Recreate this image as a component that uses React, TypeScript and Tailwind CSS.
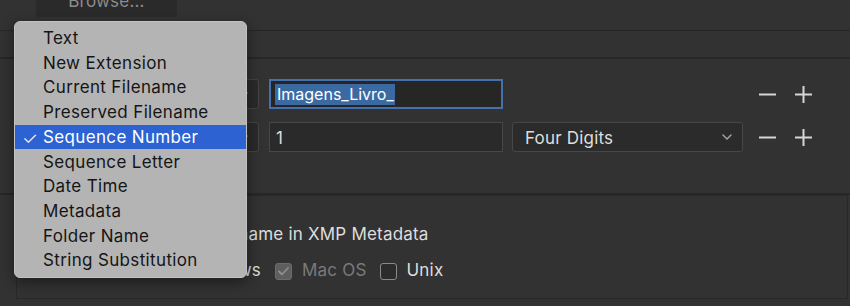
import React from "react";

const MENU_ITEMS = [
  "Text",
  "New Extension",
  "Current Filename",
  "Preserved Filename",
  "Sequence Number",
  "Sequence Letter",
  "Date Time",
  "Metadata",
  "Folder Name",
  "String Substitution",
];

function Chevron() {
  return (
    <svg width="10" height="6" viewBox="0 0 10 6" fill="none">
      <path d="M1 1l4 4 4-4" stroke="#a8a8a8" strokeWidth="1.4" strokeLinecap="round" strokeLinejoin="round" />
    </svg>
  );
}

function MinusPlus() {
  return (
    <div className="ml-[16px] flex items-center gap-[19px]">
      <svg width="17" height="17" viewBox="0 0 17 17">
        <path d="M0 8.5h17" stroke="#d6d6d6" strokeWidth="2" />
      </svg>
      <svg width="17" height="17" viewBox="0 0 17 17">
        <path d="M0 8.5h17M8.5 0v17" stroke="#d6d6d6" strokeWidth="2" />
      </svg>
    </div>
  );
}

function Checkbox({ checked, disabled }: { checked?: boolean; disabled?: boolean }) {
  if (checked) {
    return (
      <div className="w-[17px] h-[17px] rounded-[3px] bg-[#5e5e5e] border border-[#6c6c6c] flex items-center justify-center">
        <svg width="11" height="9" viewBox="0 0 11 9" fill="none">
          <path d="M1 4.5l3 3 6-6.5" stroke={disabled ? "#8e8e8e" : "#ffffff"} strokeWidth="1.8" strokeLinecap="round" strokeLinejoin="round" />
        </svg>
      </div>
    );
  }
  return <div className="w-[17px] h-[17px] rounded-[3px] border border-[#8a8a8a] bg-[#2c2c2c]" />;
}

export default function App() {
  return (
    <div className="relative w-[850px] h-[306px] overflow-hidden bg-[#323232] font-['Inter','Noto_Sans',sans-serif] text-[17px] tracking-[0.2px] text-[#dedede]">
      {/* Top: Browse button cut off */}
      <div className="h-[30px] pl-[36px]">
        <div className="w-[141px] h-[17px] bg-[#2a2a2a] rounded-b-[4px] overflow-hidden flex justify-center">
          <span className="block leading-[20px] -mt-[9px] text-[#8c8c8c]">Browse...</span>
        </div>
      </div>
      <div className="h-px bg-[#262626]" />
      <div className="h-[26px]" />
      <div className="h-[2px] bg-[#272727]" />

      {/* Naming rows */}
      <div className="h-[134px] pt-[20px] flex flex-col gap-[13px]">
        <div className="flex items-center h-[30px]">
          <div className="ml-[90px] w-[169px] h-[30px] bg-[#2a2a2a] border border-[#444] rounded-[3px] flex items-center justify-between px-[10px] pt-[2px]">
            <span>Text</span>
            <Chevron />
          </div>
          <div className="ml-[10px] w-[234px] h-[30px] bg-[#262626] border-2 border-[#4470ae] flex items-center px-[4px] pt-[1px]">
            <span className="bg-[#3b6aa3] text-white text-[16px] tracking-normal leading-[21px] pl-[2px] pr-[1px]">Imagens_Livro_</span>
          </div>
          <div className="ml-[9px] w-[231px]" />
          <MinusPlus />
        </div>
        <div className="flex items-center h-[30px]">
          <div className="ml-[90px] w-[169px] h-[30px] bg-[#2a2a2a] border border-[#444] rounded-[3px] flex items-center justify-between px-[10px] pt-[2px]">
            <span>Sequence</span>
            <Chevron />
          </div>
          <div className="ml-[10px] w-[234px] h-[30px] bg-[#2a2a2a] border border-[#474747] flex items-center px-[6px] pt-[3px]">
            <span>1</span>
          </div>
          <div className="ml-[9px] w-[231px] h-[30px] bg-[#2b2b2b] border border-[#474747] rounded-[3px] flex items-center justify-between pl-[12px] pr-[10px]">
            <span className="pt-[3px]">Four Digits</span>
            <Chevron />
          </div>
          <MinusPlus />
        </div>
      </div>
      <div className="h-[2px] bg-[#272727]" />

      {/* Options box */}
      <div className="ml-[16px] mr-[2px] h-[104px] border border-[#282828] flex flex-col pt-[30px] gap-[18px]">
        <div className="flex items-center gap-[10px] pl-[20px] h-[18px]">
          <Checkbox checked />
          <span>Preserve Current Filename in XMP Metadata</span>
        </div>
        <div className="flex items-center h-[18px]">
          <div className="w-[244px] flex items-center justify-end gap-[10px]">
            <div className="-mt-[3px]"><Checkbox /></div>
            <span>Windows</span>
          </div>
          <div className="ml-[14px]"><Checkbox checked disabled /></div>
          <span className="ml-[10px] text-[#7a7a7a]">Mac OS</span>
          <div className="ml-[13px]"><Checkbox /></div>
          <span className="ml-[10px]">Unix</span>
        </div>
      </div>

      {/* Popup menu */}
      <div className="absolute left-[14px] top-[21px] w-[233px] h-[257px] rounded-[6px] bg-[#b4b4b4] border border-[#c2c2c2] shadow-[0_4px_14px_rgba(0,0,0,0.45)] py-[4px] text-[#151515] tracking-[0.35px]">
        {MENU_ITEMS.map((item) => {
          const active = item === "Sequence Number";
          return (
            <div
              key={item}
              className={
                active
                  ? "relative h-[24.7px] flex items-center pl-[28px] pt-[1px] bg-[#2c62d2] text-white"
                  : "relative h-[24.7px] flex items-center pl-[28px] pt-[1px]"
              }
            >
              {active && <span className="absolute left-[7px] top-[0px] text-[18px] font-light">✓</span>}
              {item}
            </div>
          );
        })}
      </div>
    </div>
  );
}
